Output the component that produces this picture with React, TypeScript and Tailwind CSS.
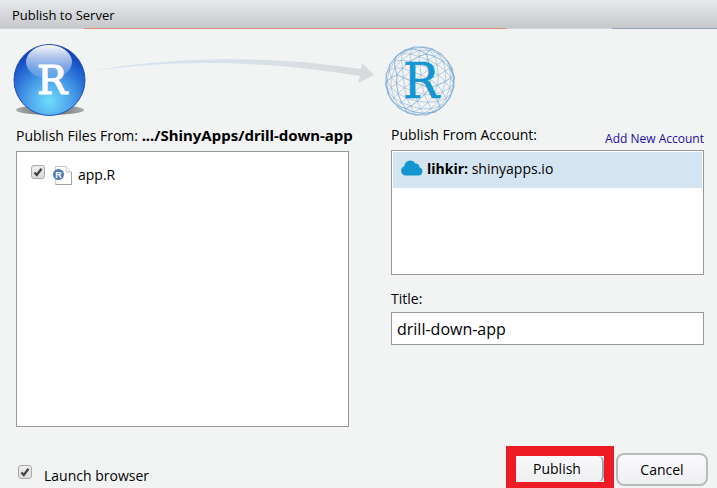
import type { ReactNode } from 'react';

type Vec = [number, number, number];

function buildMesh(frequency: number, radius: number): string {
  const phi = (1 + Math.sqrt(5)) / 2;
  const corners: Vec[] = [];
  for (const a of [-1, 1]) {
    for (const b of [-phi, phi]) {
      corners.push([0, a, b], [a, b, 0], [b, 0, a]);
    }
  }
  const dist = (p: Vec, q: Vec) => Math.hypot(p[0] - q[0], p[1] - q[1], p[2] - q[2]);
  const near = (p: Vec, q: Vec) => Math.abs(dist(p, q) - 2) < 0.01;
  const project = (v: Vec): Vec => {
    const n = Math.hypot(v[0], v[1], v[2]);
    const x = v[0] / n;
    const y = v[1] / n;
    const z = v[2] / n;
    const y2 = y * Math.cos(0.35) - z * Math.sin(0.35);
    const z2 = y * Math.sin(0.35) + z * Math.cos(0.35);
    return [x * Math.cos(0.3) + z2 * Math.sin(0.3), y2, -x * Math.sin(0.3) + z2 * Math.cos(0.3)];
  };
  const segments: string[] = [];
  const line = (p: Vec, q: Vec) => {
    if (p[2] + q[2] < -0.35) return;
    const f = (n: number) => (n * radius).toFixed(2);
    segments.push(`M${f(p[0])} ${f(p[1])}L${f(q[0])} ${f(q[1])}`);
  };
  for (let i = 0; i < 12; i++) {
    for (let j = i + 1; j < 12; j++) {
      if (!near(corners[i], corners[j])) continue;
      for (let k = j + 1; k < 12; k++) {
        if (!near(corners[i], corners[k]) || !near(corners[j], corners[k])) continue;
        const at = (a: number, b: number): Vec => {
          const c = frequency - a - b;
          return project([0, 1, 2].map((m) => corners[i][m] * a + corners[j][m] * b + corners[k][m] * c) as Vec);
        };
        for (let a = 0; a < frequency; a++) {
          for (let b = 0; a + b < frequency; b++) {
            line(at(a, b), at(a + 1, b));
            line(at(a, b), at(a, b + 1));
            line(at(a + 1, b), at(a, b + 1));
          }
        }
      }
    }
  }
  return segments.join('');
}

const mesh = buildMesh(4, 34.5);

function RStudioLogo() {
  return (
    <svg width="76" height="76" viewBox="0 0 76 76" aria-hidden="true">
      <defs>
        <radialGradient id="ball" cx="0.5" cy="0.8" r="0.8">
          <stop offset="0" stopColor="#6fdcfb" />
          <stop offset="0.4" stopColor="#4a9fea" />
          <stop offset="0.7" stopColor="#2468d3" />
          <stop offset="1" stopColor="#0737b0" />
        </radialGradient>
        <linearGradient id="gloss" x1="0" y1="0" x2="0" y2="1">
          <stop offset="0" stopColor="#fff" stopOpacity="0.98" />
          <stop offset="1" stopColor="#fff" stopOpacity="0.08" />
        </linearGradient>
        <linearGradient id="shade" x1="0" x2="1">
          <stop offset="0" stopColor="#aaabae" />
          <stop offset="0.5" stopColor="#666" />
          <stop offset="1" stopColor="#aaabae" />
        </linearGradient>
      </defs>
      <ellipse cx="38" cy="69" rx="34" ry="5" fill="url(#shade)" />
      <circle cx="37.500" cy="39" r="35.500" fill="url(#ball)" stroke="#2350b4" />
      <ellipse cx="37" cy="21" rx="23" ry="17" fill="url(#gloss)" />
      <text x="40" y="53" textAnchor="middle" fontSize="40" fill="#fff" stroke="#fff" strokeWidth="1.2" className="font-['DejaVu_Serif',serif]">R</text>
    </svg>
  );
}

function ConnectLogo() {
  return (
    <svg width="72" height="72" viewBox="-36 -36 72 72" aria-hidden="true">
      <path d={mesh} stroke="#7fa9d0" strokeWidth="0.6" fill="none" opacity="0.85" />
      <text x="1" y="17" textAnchor="middle" fontSize="48" fill="#1496d1" stroke="#1496d1" strokeWidth="0.7" className="font-['DejaVu_Serif',serif]">R</text>
    </svg>
  );
}

function Arrow() {
  return (
    <svg width="290" height="28" viewBox="0 0 290 28" aria-hidden="true">
      <defs>
        <linearGradient id="sweep" x1="0" x2="1">
          <stop offset="0" stopColor="#d6e5f3" />
          <stop offset="0.5" stopColor="#d7e1ea" />
          <stop offset="0.85" stopColor="#d9dddf" />
          <stop offset="1" stopColor="#d8d9dd" />
        </linearGradient>
      </defs>
      <path d="M-1 15C80 -1 180 -2 273 12L274 6L286 18L270 26L272 19C180 4 90 1 -1 15Z" fill="url(#sweep)" />
    </svg>
  );
}

function Check({ id, label, children }: { id: string; label?: string; children?: ReactNode }) {
  return (
    <>
      <span className="grid h-[14px] w-[14px] shrink-0">
        <input
          id={id}
          type="checkbox"
          defaultChecked
          aria-label={label}
          className="peer col-start-1 row-start-1 h-[14px] w-[14px] appearance-none rounded-[3px] border border-[#a9a9a9] bg-linear-to-b from-[#eeeeee] to-[#dcdcdc]"
        />
        <svg viewBox="0 0 14 14" className="pointer-events-none invisible col-start-1 row-start-1 h-[14px] w-[14px] peer-checked:visible" aria-hidden="true">
          <path d="M3.500 7.500L5.800 10L10.500 3.800" fill="none" stroke="#444" strokeWidth="2.400" />
        </svg>
      </span>
      {children}
    </>
  );
}

function FileIcon() {
  return (
    <svg width="20" height="20" viewBox="0 0 20 20" aria-hidden="true">
      <path d="M2.500 1.500H13L18.500 7V19.500H2.500Z" fill="#fff" stroke="#c8c8c8" />
      <path d="M13 1.500V7H18.500" fill="#f4f4f4" stroke="#c8c8c8" />
      <path d="M18.500 7V19.500H2.500" fill="none" stroke="#a2a2a2" />
      <circle cx="5.500" cy="9.500" r="5.500" fill="#4f7cb3" />
      <text x="5.500" y="12.500" textAnchor="middle" fontSize="9" fontWeight="700" fill="#fff" className="font-['Liberation_Sans',sans-serif]">R</text>
    </svg>
  );
}

function Cloud() {
  return (
    <svg width="22" height="16" viewBox="0 0 22 16" className="mb-1" aria-hidden="true">
      <path d="M5 15.500A4.800 4.800 0 0 1 3.300 6.200A6 6 0 0 1 14.400 3.400A4 4 0 0 1 18.400 7.300A4.200 4.200 0 0 1 17.500 15.500Z" fill="#1496d1" />
    </svg>
  );
}

export default function App() {
  return (
    <main className="flex min-h-screen flex-col bg-[#f2f4f4] font-['Open_Sans','Noto_Sans',sans-serif] text-sm text-black">
      <header className="flex h-7 items-center bg-linear-to-b from-[#e8e9ed] to-[#c7c8ca] px-3 pt-[2px] text-[13px] leading-6">
        <h1>Publish to Server</h1>
      </header>
      <div className="flex h-px">
        <div className="w-[84px] bg-[#cfd1d6]" />
        <div className="flex-[423] bg-[#dc8f7c]" />
        <div className="flex-[105] bg-[#d3d4d9]" />
        <div className="flex-[105] bg-[#98a5c2]" />
      </div>

      <form className="flex grow flex-col pr-[13px] pl-4" onSubmit={(e) => e.preventDefault()}>
        <div className="grid grid-cols-[333fr_313fr] gap-x-[42px]">
          <div className="-mx-1 flex items-start pt-3">
            <RStudioLogo />
            <div className="-mr-9 grow pt-4">
              <Arrow />
            </div>
          </div>
          <div className="-ml-[7px] pt-4">
            <ConnectLogo />
          </div>
        </div>

        <div className="grid grid-cols-[333fr_313fr] gap-x-[42px] pt-2">
          <section className="flex min-w-0 flex-col">
            <h2 className="h-[26px] leading-5 whitespace-nowrap">
              Publish Files From: <b className="font-['Noto_Sans',sans-serif] text-[15px]">.../ShinyApps/drill-down-app</b>
            </h2>
            <ul className="grow border border-[#999] bg-white px-[14px] py-[13px]">
              <li className="flex gap-2">
                <Check id="file" label="app.R" />
                <label htmlFor="file" className="flex items-center gap-[5px] leading-5">
                  <FileIcon />
                  app.R
                </label>
              </li>
            </ul>
          </section>

          <section className="flex min-w-0 flex-col">
            <div className="flex h-[25px] justify-between">
              <h2 className="leading-5">Publish From Account:</h2>
              <a href="#account" className="pt-1 text-xs leading-5 text-[#1a0dab]">Add New Account</a>
            </div>
            <ul className="h-[125px] border border-[#999] bg-white p-px">
              <li className="flex h-9 items-center gap-1 bg-[#d5e4f1] pl-2">
                <Cloud />
                <span className="pb-[2px]">
                  <b>lihkir:</b> shinyapps.io
                </span>
              </li>
            </ul>
            <label htmlFor="title" className="pt-[14px] pb-[3px] leading-5">Title:</label>
            <input id="title" defaultValue="drill-down-app" className="h-[33px] w-full border border-[#999] bg-white px-[5px] text-base" />
            <div className="h-[82px]" />
          </section>
        </div>

        <footer className="flex grow items-start justify-between pt-[19px]">
          <div className="flex gap-3 pt-[19px] pl-[2px]">
            <Check id="launch">
              <label htmlFor="launch" className="leading-[22px]">Launch browser</label>
            </Check>
          </div>
          <div className="-mr-1 flex items-start gap-[2px]">
            <div className="border-[10px] border-b-[6px] border-[#ed1c24] bg-[#f2f4f4]">
              <button type="submit" className="block h-[26px] w-[88px] rounded-r-md border-r-2 border-[#9ea3a8] bg-linear-to-b from-[#f8f8fa] to-[#eeeff1] pr-1">Publish</button>
            </div>
            <button type="button" className="mt-[7px] h-[33px] w-[92px] rounded-lg border-2 border-[#b9bbbd] bg-linear-to-b from-[#fafafc] to-[#eeeff1]">Cancel</button>
          </div>
        </footer>
      </form>
    </main>
  );
}
